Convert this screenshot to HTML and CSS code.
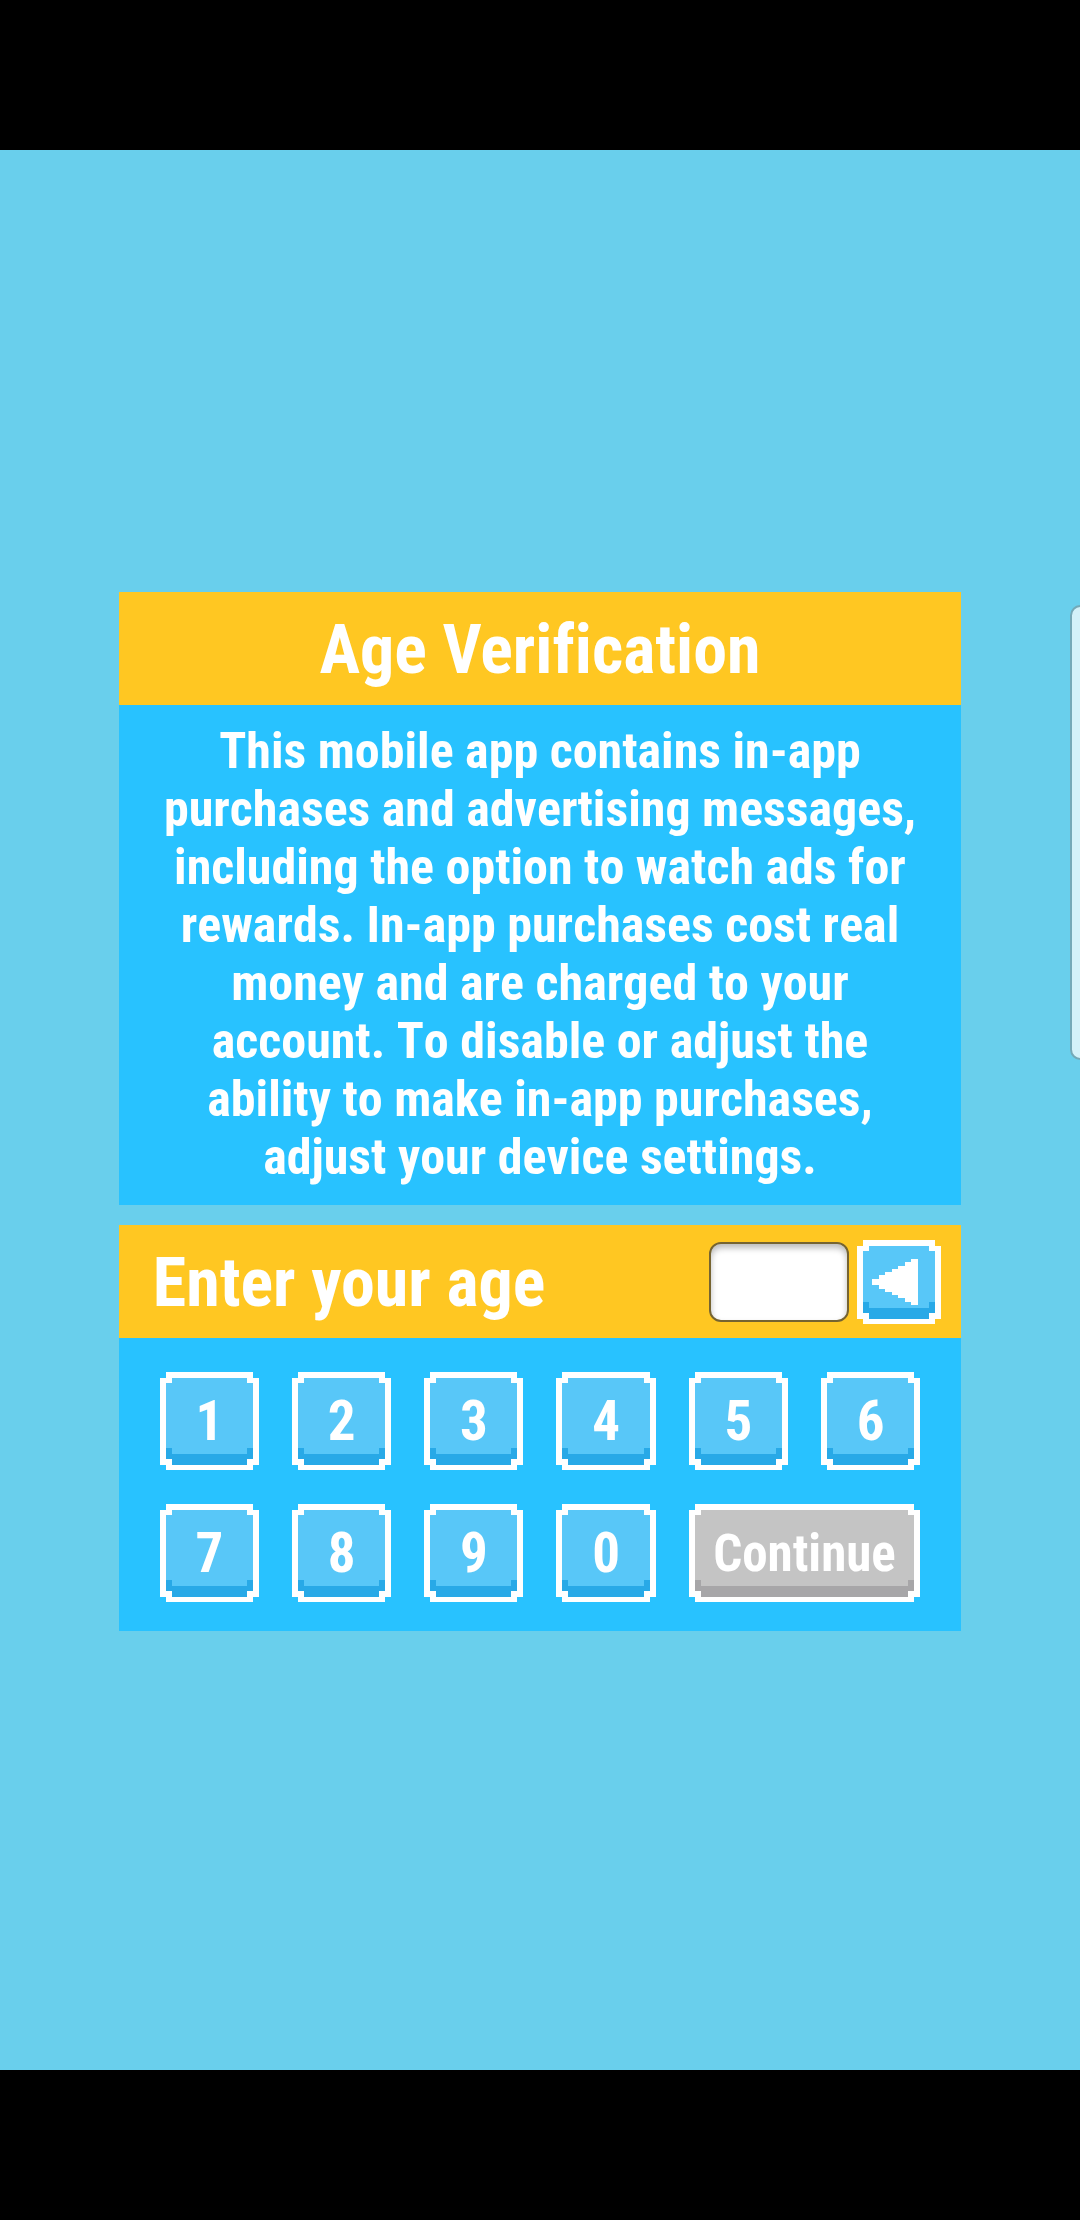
FILE: index.html
```html
<!DOCTYPE html>
<html lang="en">
<head>
<meta charset="utf-8">
<meta name="viewport" content="width=device-width, initial-scale=1">
<title>Age Verification</title>
<link rel="stylesheet" href="styles.css">
</head>
<body>
<main class="stage">
  <div class="dialog">
    <section class="panel">
      <header class="panel-header panel-header-center">
        <h1 class="heading">Age Verification</h1>
      </header>
      <p class="notice">This mobile app contains in-app purchases and advertising messages, including the option to watch ads for rewards. In-app purchases cost real money and are charged to your account. To disable or adjust the ability to make in-app purchases, adjust your device settings.</p>
    </section>
    <form class="panel">
      <div class="panel-header">
        <label class="heading" for="age">Enter your age</label>
        <div class="entry">
          <input class="age-input" id="age" type="text" inputmode="numeric" readonly>
          <button class="pixel-button back" type="button" aria-label="Delete">
            <svg class="arrow" viewBox="0 0 14 14" shape-rendering="crispEdges" aria-hidden="true"><path fill="#fff" d="M0 6h2V5h2V4h2V3h2V2h2V1h2V0h2v14h-2v-1h-2v-1H8v-1H6v-1H4V9H2V8H0z"/></svg>
          </button>
        </div>
      </div>
      <div class="keypad">
        <button class="pixel-button key" type="button">1</button>
        <button class="pixel-button key" type="button">2</button>
        <button class="pixel-button key" type="button">3</button>
        <button class="pixel-button key" type="button">4</button>
        <button class="pixel-button key" type="button">5</button>
        <button class="pixel-button key" type="button">6</button>
        <button class="pixel-button key" type="button">7</button>
        <button class="pixel-button key" type="button">8</button>
        <button class="pixel-button key" type="button">9</button>
        <button class="pixel-button key" type="button">0</button>
        <button class="pixel-button continue" type="submit" disabled>Continue</button>
      </div>
    </form>
  </div>
  <div class="edge-handle"></div>
</main>
</body>
</html>
```
FILE: styles.css
```css
* {
  box-sizing: border-box;
}

body {
  margin: 0;
  padding: 150px 0;
  background: #000;
  color: #fff;
  font-family: "Roboto Condensed", Roboto, sans-serif;
  font-weight: 700;
  font-variant-ligatures: none;
}

.stage {
  position: relative;
  display: grid;
  align-items: center;
  justify-items: center;
  min-height: calc(100vh - 300px);
  padding-top: 3px;
  overflow: hidden;
  background: #69cfec;
}

.dialog {
  display: flex;
  flex-direction: column;
  gap: 20px;
  width: 78%;
}

.panel {
  background: #28c2ff;
}

.panel-header {
  display: flex;
  align-items: center;
  justify-content: space-between;
  min-height: 113px;
  padding: 0 20px 0 34px;
  background: #ffc722;
}

.panel-header-center {
  justify-content: center;
  padding: 0;
}

.heading {
  margin: 0;
  padding-top: 2px;
  font-size: 68px;
  font-weight: 700;
  line-height: 80px;
}

.notice {
  margin: 0;
  padding: 17px 40px 19px;
  font-size: 50px;
  font-kerning: none;
  line-height: 58px;
  text-align: center;
}

.entry {
  display: flex;
  align-items: center;
  gap: 8px;
}

.age-input {
  width: 140px;
  height: 80px;
  padding: 0 12px;
  border: 2px solid #766431;
  border-radius: 12px;
  background: #fff;
  box-shadow: inset 0 4px 6px #bbb;
  color: #333;
  font: inherit;
  font-size: 50px;
  text-align: center;
}

.keypad {
  display: grid;
  grid-template-columns: repeat(6, 1fr);
  gap: 34px 33px;
  padding: 34px 41px 29px;
}

/* Pixel-art frame: stepped white outline with a darker lip along the bottom */
.pixel-button {
  display: flex;
  align-items: center;
  justify-content: center;
  height: 98px;
  padding: 0;
  border: 1px solid transparent;
  background: none;
  color: #fff;
  font: inherit;
  border-image-source: url("data:image/svg+xml,%3Csvg xmlns='http://www.w3.org/2000/svg' width='96' height='88' viewBox='0 0 8 8' preserveAspectRatio='none' shape-rendering='crispEdges'%3E%3Cpath fill='%23fff' d='M1 0h6v1h1v6H7v1H1V7H0V1h1z'/%3E%3Cpath fill='%2358c7f8' d='M2 1h4v1h1v2H6v1H2V4H1V2h1z'/%3E%3Cpath fill='%2328a9e7' d='M1 4h1v1h4V4h1v2H6v1H2V6H1z'/%3E%3C/svg%3E");
  border-image-slice: 22 24 44 24 fill;
  border-image-width: 11px 12px 22px 12px;
}

.key {
  font-size: 55px;
}

.back {
  width: 84px;
  height: 84px;
  padding-right: 8px;
}

.arrow {
  width: 46px;
  height: 46px;
}

.continue {
  grid-column: span 2;
  font-size: 51px;
  border-image-source: url("data:image/svg+xml,%3Csvg xmlns='http://www.w3.org/2000/svg' width='96' height='88' viewBox='0 0 8 8' preserveAspectRatio='none' shape-rendering='crispEdges'%3E%3Cpath fill='%23fff' d='M1 0h6v1h1v6H7v1H1V7H0V1h1z'/%3E%3Cpath fill='%23c4c4c4' d='M2 1h4v1h1v2H6v1H2V4H1V2h1z'/%3E%3Cpath fill='%23a7a6a8' d='M1 4h1v1h4V4h1v2H6v1H2V6H1z'/%3E%3C/svg%3E");
}

/* System side-panel handle, floating over the right edge */
.edge-handle {
  position: absolute;
  top: 455px;
  right: -11px;
  width: 21px;
  height: 455px;
  border: 2px solid #74a9b8;
  border-radius: 14px;
  background: #d3f1f9;
}
```
